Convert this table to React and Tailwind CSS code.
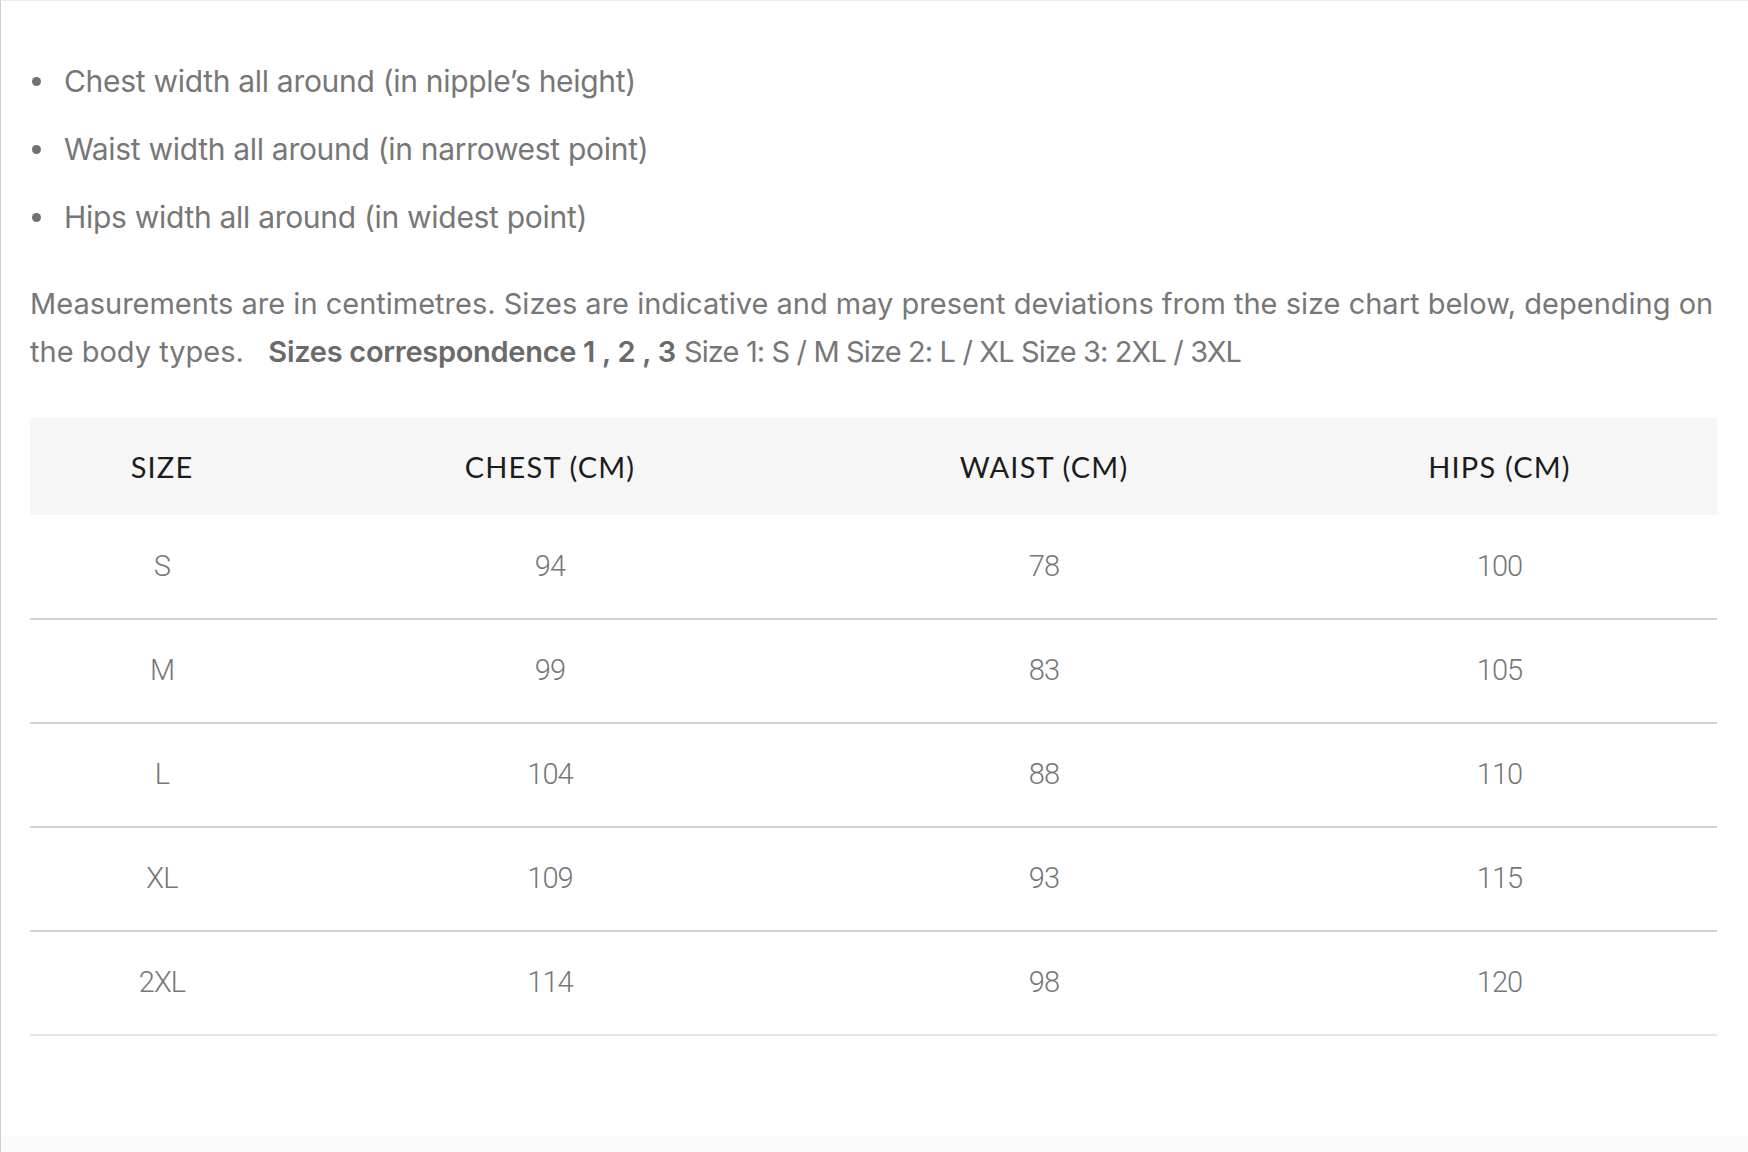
import React from "react";

const rows = [
  ["S", "94", "78", "100"],
  ["M", "99", "83", "105"],
  ["L", "104", "88", "110"],
  ["XL", "109", "93", "115"],
  ["2XL", "114", "98", "120"],
];

const bullets = [
  "Chest width all around (in nipple’s height)",
  "Waist width all around (in narrowest point)",
  "Hips width all around (in widest point)",
];

export default function App() {
  return (
    <div
      className="w-[1748px] h-[1152px] bg-white border-l border-[#cfcfcf] border-t border-t-[#ececec] flex flex-col overflow-hidden"
      style={{ fontFamily: "Inter, 'Liberation Sans', sans-serif" }}
    >
      <div className="flex-1 pl-[29px] pr-[30px] pt-[60px]">
        <ul className="flex flex-col gap-[28px] text-[30px] leading-[40px] text-[#777777] tracking-[-0.01em]">
          {bullets.map((b) => (
            <li key={b} className="flex items-center">
              <span className="w-[9px] h-[9px] rounded-full bg-[#727272] ml-[2px] mr-[23px]" />
              <span>{b}</span>
            </li>
          ))}
        </ul>
        <p className="mt-[43px] text-[29px] leading-[48px] text-[#777777] tracking-[0em]">
          Measurements are in centimetres. Sizes are indicative and may present deviations from the size chart below, depending on the body types.{"\u00a0\u00a0 "}
          <span className="font-semibold text-[#6a6a6a] tracking-[-0.01em]">Sizes correspondence 1 , 2 , 3</span>{" "}
          <span className="tracking-[-0.03em]">Size 1: S / M Size 2: L / XL Size 3: 2XL / 3XL</span>
        </p>
        <table className="mt-[42px] w-[1687px] border-collapse table-fixed">
          <colgroup>
            <col className="w-[264px]" />
            <col className="w-[512px]" />
            <col className="w-[476px]" />
            <col />
          </colgroup>
          <thead>
            <tr className="bg-[#f6f6f6] h-[97px]">
              {["SIZE", "CHEST (CM)", "WAIST (CM)", "HIPS (CM)"].map((h) => (
                <th
                  key={h}
                  className="font-normal text-[29px] tracking-[0.04em] text-[#1c1c1c] text-center"
                  style={{ fontFamily: "Lato, 'Open Sans', sans-serif" }}
                >
                  {h}
                </th>
              ))}
            </tr>
          </thead>
          <tbody>
            {rows.map((r, i) => (
              <tr
                key={r[0]}
                className={`h-[104px] border-b-2 ${i === rows.length - 1 ? "border-[#e6e6e6]" : "border-[#d2d2d2]"}`}
              >
                {r.map((c, j) => (
                  <td
                    key={j}
                    className="text-center text-[29px] tracking-[-0.03em] text-[#777777]"
                    style={{ fontFamily: "Roboto, 'Liberation Sans', sans-serif", fontWeight: 300 }}
                  >
                    {c}
                  </td>
                ))}
              </tr>
            ))}
          </tbody>
        </table>
      </div>
      <div className="h-[16px] bg-[#fafafa]" />
    </div>
  );
}
